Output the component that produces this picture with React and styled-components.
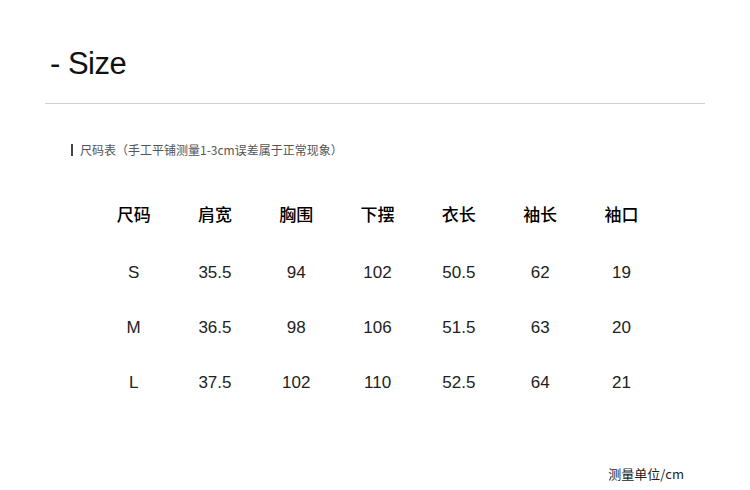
import React from "react";
import styled, { createGlobalStyle } from "styled-components";

const Global = createGlobalStyle`
  html, body { margin: 0; padding: 0; background: #fff; }
  body { font-family: "Liberation Sans", "Noto Sans CJK SC", sans-serif; color: #111; }
`;

const Page = styled.div`
  width: 750px;
  height: 490px;
  box-sizing: border-box;
  padding: 0 45px;
  display: flex;
  flex-direction: column;
  overflow: hidden;
`;

const Title = styled.h1`
  margin: 0;
  padding: 44px 0 0 5px;
  font-family: "Liberation Sans", sans-serif;
  font-weight: 400;
  font-size: 31px;
  line-height: 40px;
  letter-spacing: -0.5px;
  color: #111;
`;

const Rule = styled.hr`
  margin: 19px 0 0;
  border: 0;
  height: 1px;
  background: #cfcfcf;
`;

const Note = styled.div`
  margin: 38px 0 0 26px;
  display: flex;
  align-items: center;
  gap: 7px;
  font-family: "Noto Sans CJK SC", sans-serif;
  font-size: 12px;
  line-height: 16px;
  color: #555;
`;

const Bar = styled.span`
  width: 2px;
  height: 12px;
  background: #444;
`;

const Table = styled.div`
  margin: 46px 0 0 48px;
  display: grid;
  grid-template-columns: repeat(7, 81.3px);
`;

const Cell = styled.div`
  height: ${(p) => (p.$head ? "57px" : "55px")};
  display: flex;
  align-items: flex-start;
  justify-content: center;
  padding-top: ${(p) => (p.$head ? "0" : "2px")};
  box-sizing: border-box;
  font-family: ${(p) =>
    p.$head ? '"Noto Sans CJK SC", sans-serif' : '"Liberation Sans", "Noto Sans CJK SC", sans-serif'};
  font-weight: ${(p) => (p.$head ? 500 : 400)};
  font-size: 17px;
  line-height: 20px;
  color: ${(p) => (p.$head ? "#000" : "#222")};
`;

const Unit = styled.div`
  margin: auto 21px 8px 0;
  align-self: flex-end;
  font-family: "Noto Sans CJK SC", sans-serif;
  font-size: 13px;
  line-height: 16px;
  color: #222;
`;

const heads = ["尺码", "肩宽", "胸围", "下摆", "衣长", "袖长", "袖口"];
const rows = [
  ["S", "35.5", "94", "102", "50.5", "62", "19"],
  ["M", "36.5", "98", "106", "51.5", "63", "20"],
  ["L", "37.5", "102", "110", "52.5", "64", "21"],
];

export default function App() {
  return (
    <>
      <Global />
      <Page>
        <Title>- Size</Title>
        <Rule />
        <Note>
          <Bar />
          <span>尺码表（手工平铺测量1-3cm误差属于正常现象）</span>
        </Note>
        <Table>
          {heads.map((h) => (
            <Cell key={h} $head>
              {h}
            </Cell>
          ))}
          {rows.map((r) =>
            r.map((v, i) => <Cell key={r[0] + i}>{v}</Cell>)
          )}
        </Table>
        <Unit>测量单位/cm</Unit>
      </Page>
    </>
  );
}
